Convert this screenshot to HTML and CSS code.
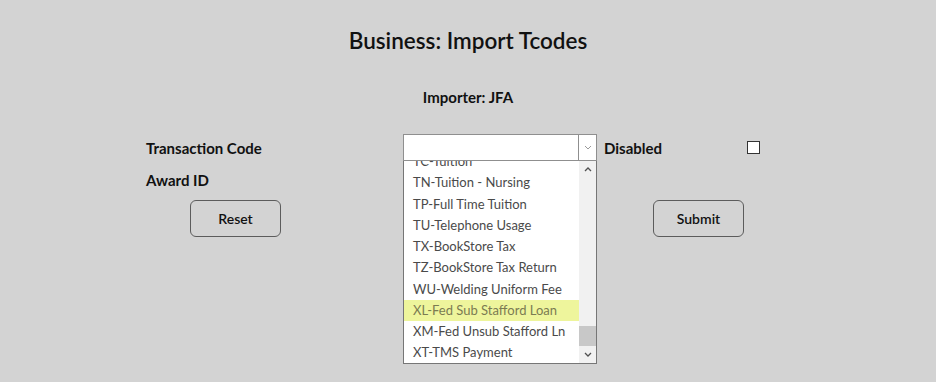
FILE: index.html
```html
<!DOCTYPE html>
<html lang="en">
<head>
    <meta charset="UTF-8">
    <meta name="viewport" content="width=device-width, initial-scale=1.0">
    <title>Business: Import Tcodes</title>
    <link rel="stylesheet" href="styles.css">
</head>
<body>
    <div class="page">
        <h1 class="title">Business: Import Tcodes</h1>
        <p class="importer">Importer: JFA</p>

        <div class="form">
            <label class="label">Transaction Code</label>
            <div class="select-wrap">
                <div class="select">
                    <span class="select-value"></span>
                    <span class="select-arrow">
                        <svg width="8" height="5" viewBox="0 0 8 5"><path d="M1 1l3 3 3-3" fill="none" stroke="#9a9a9a" stroke-width="1"/></svg>
                    </span>
                </div>
                <div class="dropdown">
                    <ul class="options">
                        <li>TC-Tuition</li>
                        <li>TN-Tuition - Nursing</li>
                        <li>TP-Full Time Tuition</li>
                        <li>TU-Telephone Usage</li>
                        <li>TX-BookStore Tax</li>
                        <li>TZ-BookStore Tax Return</li>
                        <li>WU-Welding Uniform Fee</li>
                        <li class="hover">XL-Fed Sub Stafford Loan</li>
                        <li>XM-Fed Unsub Stafford Ln</li>
                        <li>XT-TMS Payment</li>
                    </ul>
                    <div class="scrollbar">
                        <span class="sb-btn">
                            <svg width="8" height="5" viewBox="0 0 8 5"><path d="M1 4l3-3 3 3" fill="none" stroke="#505050" stroke-width="1.3"/></svg>
                        </span>
                        <div class="sb-track"><div class="sb-thumb"></div></div>
                        <span class="sb-btn">
                            <svg width="8" height="5" viewBox="0 0 8 5"><path d="M1 1l3 3 3-3" fill="none" stroke="#505050" stroke-width="1.3"/></svg>
                        </span>
                    </div>
                </div>
            </div>
            <label class="label">Disabled</label>
            <span class="checkbox"></span>

            <label class="label award">Award ID</label>
        </div>

        <div class="buttons">
            <button class="btn">Reset</button>
            <button class="btn">Submit</button>
        </div>
    </div>
</body>
</html>
```

FILE: styles.css
```css
body, html {
    margin: 0;
    padding: 0;
    background: #d3d3d3;
    font-family: "Lato", "Open Sans", sans-serif;
    color: #111;
}
.page {
    box-sizing: border-box;
    min-height: 100vh;
    padding-top: 26px;
}
.title {
    margin: 0;
    text-align: center;
    font-size: 22.5px;
    font-weight: 600;
    line-height: 30px;
}
.importer {
    margin: 0;
    margin-top: 32px;
    text-align: center;
    font-size: 15px;
    font-weight: 700;
    line-height: 18px;
}
.form {
    margin-top: 28px;
    margin-left: 146px;
    display: grid;
    grid-template-columns: 257px 201px 143px 14px;
    grid-template-rows: 27px 39px;
    align-items: center;
}
.label {
    font-size: 15px;
    font-weight: 700;
}
.award {
    grid-column: 1;
    align-self: start;
    padding-top: 10px;
}
.select-wrap {
    position: relative;
    width: 194px;
    height: 27px;
}
.select {
    box-sizing: border-box;
    height: 27px;
    background: #fff;
    border: 1px solid #8f8f8f;
    display: flex;
}
.select-value {
    flex: 1;
}
.select-arrow {
    width: 17px;
    border-left: 1px solid #8f8f8f;
    display: flex;
    align-items: center;
    justify-content: center;
}
.checkbox {
    box-sizing: border-box;
    width: 13px;
    height: 13px;
    background: #fff;
    border: 1px solid #333;
}
.dropdown {
    position: absolute;
    top: 27px;
    left: 0;
    width: 194px;
    height: 203px;
    box-sizing: border-box;
    background: #fff;
    border: 1px solid #767676;
    border-top: none;
    overflow: hidden;
    display: flex;
    z-index: 2;
}
.options {
    list-style: none;
    margin: -10px 0 0;
    padding: 0;
    flex: 1;
}
.options li {
    height: 21.25px;
    line-height: 21.25px;
    padding-left: 9px;
    font-size: 13px;
    color: #4a4a4a;
    white-space: nowrap;
}
.options li.hover {
    background: #eef59c;
    color: #7b7b52;
}
.scrollbar {
    width: 17px;
    background: #f1f1f1;
    display: flex;
    flex-direction: column;
}
.sb-btn {
    height: 17px;
    display: flex;
    align-items: center;
    justify-content: center;
}
.sb-track {
    flex: 1;
    display: flex;
    flex-direction: column;
    justify-content: flex-end;
}
.sb-thumb {
    height: 20px;
    background: #c8c8c8;
}
.buttons {
    margin-left: 190px;
    display: flex;
    gap: 372px;
}
.btn {
    width: 91px;
    height: 37px;
    background: transparent;
    border: 1px solid #5c5c5c;
    border-radius: 6px;
    font-family: inherit;
    font-size: 14px;
    font-weight: 600;
    color: #111;
    padding: 0;
}
```
